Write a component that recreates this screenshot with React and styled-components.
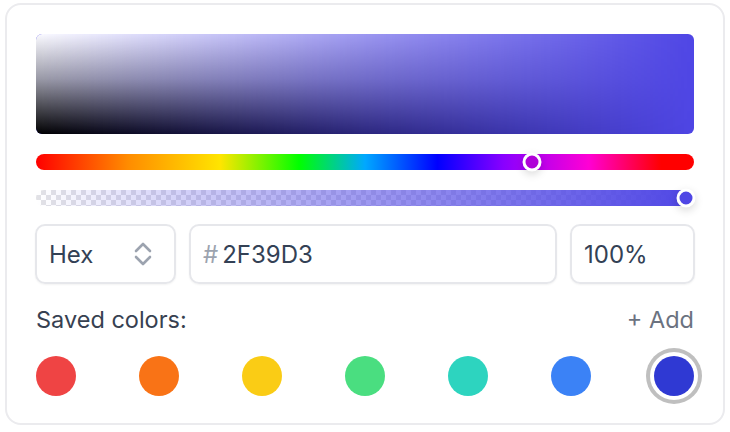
import React from "react";
import styled, { createGlobalStyle } from "styled-components";

const Global = createGlobalStyle`
  html, body { margin: 0; padding: 0; background: #fff; }
  body { font-family: Inter, "Noto Sans", sans-serif; }
`;

const Page = styled.div`
  padding: 3px 5px;
`;

const Card = styled.div`
  box-sizing: border-box;
  width: 720px;
  height: 422px;
  border: 2px solid #ebebee;
  border-radius: 16px;
  padding: 29px 29px 0 29px;
  display: flex;
  flex-direction: column;
  background: #fff;
`;

const Spectrum = styled.div`
  position: relative;
  height: 100px;
  border-radius: 6px;
  overflow: hidden;
  background: #4f46e5;
  &::before {
    content: "";
    position: absolute;
    inset: 0;
    background: linear-gradient(to bottom, #fbfbff 0%, #9a9aa6 45%, #000 100%);
    -webkit-mask-image: linear-gradient(to right, #000 0%, rgba(0,0,0,0.45) 50%, transparent 100%);
    mask-image: linear-gradient(to right, #000 0%, rgba(0,0,0,0.45) 50%, transparent 100%);
  }
`;

const Track = styled.div`
  position: relative;
  height: 16px;
  border-radius: 8px;
  margin-top: ${(p) => p.$mt}px;
  background: ${(p) => p.$bg};
`;

const Thumb = styled.div`
  position: absolute;
  top: 50%;
  width: 13px;
  height: 13px;
  border: 3px solid #fff;
  border-radius: 50%;
  transform: translate(-50%, -50%);
  background: ${(p) => p.$color};
  box-shadow: 0 3px 8px rgba(0,0,0,0.15);
`;

const hue =
  "linear-gradient(to right, #ff0000 0%, #ff8c00 14%, #ffe500 28%, #00ff00 40%, #00a8ff 50%, #0000ff 61%, #8800ff 71%, #ff00d4 84%, #ff0000 95%, #ff0000 100%)";

const alpha =
  "linear-gradient(to right, rgba(79,70,229,0) 0%, rgba(79,70,229,0.5) 45%, rgba(79,70,229,1) 100%), repeating-conic-gradient(#e2e2e6 0% 25%, #ffffff 0% 50%) 0 0 / 10px 10px";

const InputsRow = styled.div`
  display: grid;
  grid-template-columns: 141px 1fr 125px;
  gap: 13px;
  margin-top: 18px;
  margin-left: -1px;
  margin-right: -1px;
`;

const Field = styled.div`
  box-sizing: border-box;
  height: 60px;
  border: 2px solid #e6e7eb;
  border-radius: 10px;
  box-shadow: 0 1px 2px rgba(0,0,0,0.05);
  display: flex;
  align-items: center;
  padding: 0 ${(p) => p.$pr || 12}px 0 12px;
  justify-content: space-between;
  font-size: 24px;
  color: #334155;
`;

const Value = styled.span`
  display: flex;
  align-items: center;
  gap: 4px;
`;

const Hash = styled.span`
  color: #9ca3af;
`;

const LabelRow = styled.div`
  display: flex;
  justify-content: space-between;
  align-items: center;
  margin-top: 21px;
  font-size: 23.5px;
  line-height: 30px;
`;

const Label = styled.span`
  color: #374151;
`;

const Add = styled.span`
  color: #6b7280;
`;

const Swatches = styled.div`
  display: flex;
  justify-content: space-between;
  margin-top: 21px;
`;

const Swatch = styled.div`
  width: 40px;
  height: 40px;
  border-radius: 50%;
  background: ${(p) => p.$c};
  box-shadow: ${(p) =>
    p.$selected ? "0 0 0 4px #fff, 0 0 0 8px #bfbfbf" : "none"};
`;

const Chevrons = () => (
  <svg width="22" height="26" viewBox="0 0 22 26" fill="none" stroke="#9ca3af" strokeWidth="2.6" strokeLinecap="round" strokeLinejoin="round">
    <polyline points="4,10 11,3 18,10" />
    <polyline points="4,16 11,23 18,16" />
  </svg>
);

const colors = ["#ef4444", "#f97316", "#facc15", "#4ade80", "#2dd4bf", "#3b82f6", "#2f39d3"];

export default function App() {
  return (
    <Page>
      <Global />
      <Card>
        <Spectrum />
        <Track $mt={20} $bg={hue}>
          <Thumb $color="#b000d8" style={{ left: "75.4%" }} />
        </Track>
        <Track $mt={20} $bg={alpha}>
          <Thumb $color="#4f46e5" style={{ left: "calc(100% - 8px)" }} />
        </Track>
        <InputsRow>
          <Field $pr={20}>
            <Value>Hex</Value>
            <Chevrons />
          </Field>
          <Field>
            <Value>
              <Hash>#</Hash>2F39D3
            </Value>
          </Field>
          <Field>
            <Value>100%</Value>
          </Field>
        </InputsRow>
        <LabelRow>
          <Label>Saved colors:</Label>
          <Add>+ Add</Add>
        </LabelRow>
        <Swatches>
          {colors.map((c, i) => (
            <Swatch key={c} $c={c} $selected={i === colors.length - 1} />
          ))}
        </Swatches>
      </Card>
    </Page>
  );
}
